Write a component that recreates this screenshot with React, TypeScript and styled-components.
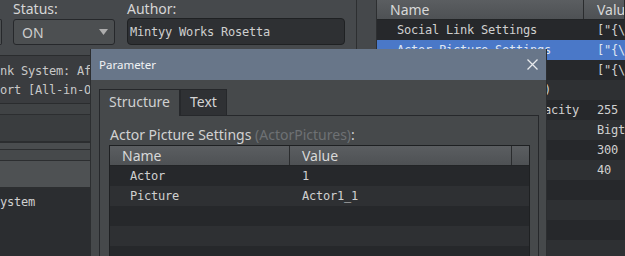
import React from 'react'
import styled, { createGlobalStyle } from 'styled-components'

const SANS = `"Noto Sans", "Open Sans", sans-serif`
const MONO = `"DejaVu Sans Mono", "Liberation Mono", monospace`

const EDGE = '#26282b'

const GlobalStyle = createGlobalStyle`
  html, body {
    margin: 0;
    padding: 0;
    width: 625px;
    height: 256px;
    overflow: hidden;
    background: #46494c;
  }
  * {
    box-sizing: border-box;
  }
`

const Root = styled.div`
  position: relative;
  display: flex;
  width: 625px;
  height: 256px;
  overflow: hidden;
  background: #46494c;
  font-family: ${SANS};
`

/* ---------- left (plugin info) ---------- */

const LeftPanel = styled.div`
  width: 356px;
  flex: none;
  display: flex;
  flex-direction: column;
`

const TopRow = styled.div`
  height: 55px;
  display: flex;
  align-items: flex-start;
  padding-top: 1px;
`

const NameStub = styled.div`
  width: 2px;
  height: 26px;
  margin: 18px 11px 0 0;
  border: 1px solid ${EDGE};
  border-left: none;
  border-radius: 0 3px 3px 0;
  background: #4d5052;
`

const Field = styled.div<{ $w: number; $gap?: number }>`
  width: ${p => p.$w}px;
  margin-left: ${p => p.$gap ?? 0}px;
  display: flex;
  flex-direction: column;
`

const Label = styled.div`
  height: 16px;
  line-height: 16px;
  margin-bottom: 2px;
  font-size: 14px;
  color: #d6d6d6;
`

const Select = styled.div`
  height: 26px;
  display: flex;
  align-items: center;
  justify-content: space-between;
  padding: 0 6px 0 8px;
  border: 1px solid ${EDGE};
  border-radius: 3px;
  background: #4c4f51;
  font-size: 14px;
  color: #cdcdcd;
`

const Input = styled.div`
  height: 27px;
  margin-top: -1px;
  display: flex;
  align-items: center;
  padding-left: 2px;
  border: 1px solid #1f2123;
  border-radius: 4px;
  background: #2e3033;
  font-family: ${MONO};
  font-size: 12px;
  letter-spacing: -0.22px;
  color: #cfcfcf;
  white-space: nowrap;
`

const HelpBox = styled.div`
  height: 49px;
  padding-top: 6px;
  border-top: 1px solid #2a2c2e;
  border-bottom: 1px solid #2a2c2e;
  background: #3a3c3f;
  font-family: ${MONO};
  font-size: 12px;
  letter-spacing: -0.22px;
  line-height: 19px;
  color: #c8c8c8;
  white-space: nowrap;
  overflow: hidden;
`

const Band = styled.div<{ $h: number; $bg: string; $line?: number }>`
  height: ${p => p.$h + (p.$line ?? 1)}px;
  background: ${p => p.$bg};
  border-bottom: ${p => p.$line ?? 1}px solid #2c2e30;
`

const PluginList = styled.div`
  flex: 1;
  padding-top: 3px;
  background: #2b2d30;
  font-family: ${MONO};
  font-size: 12px;
  letter-spacing: -0.22px;
  line-height: 20px;
  color: #d0d0d0;
  white-space: nowrap;
`

const Gutter = styled.div`
  width: 21px;
  flex: none;
  border-left: 1px solid #2d2f31;
  border-right: 1px solid #2d2f31;
  background: #45484b;
`

/* ---------- shared list look ---------- */

const Head = styled.div`
  height: 20px;
  display: flex;
  border-bottom: 1px solid #222426;
  background: linear-gradient(#5b5e61, #4e5154);
  font-size: 14px;
  line-height: 19px;
  color: #d8d8d8;
  white-space: nowrap;
`

const HeadCell = styled.div<{ $w?: number }>`
  ${p => (p.$w ? `width: ${p.$w}px; flex: none;` : 'flex: 1;')}
  padding-left: 12px;
  border-right: 1px solid #2a2c2e;
  overflow: hidden;
`

const Row = styled.div<{ $i: number; $sel?: boolean }>`
  height: 20px;
  display: flex;
  background: ${p => (p.$sel ? '#4a78c8' : p.$i % 2 ? '#2e3033' : '#26282b')};
  font-family: ${MONO};
  font-size: 12px;
  letter-spacing: -0.22px;
  line-height: 20px;
  color: ${p => (p.$sel ? '#dfe6f2' : '#d0d0d0')};
  white-space: nowrap;
`

const Cell = styled.div<{ $w?: number; $pad: number }>`
  ${p => (p.$w ? `width: ${p.$w}px; flex: none;` : 'flex: 1;')}
  padding-left: ${p => p.$pad}px;
  overflow: hidden;
`

/* ---------- right (parameter list) ---------- */

const ParamList = styled.div`
  flex: 1;
  min-width: 0;
  background: #26282b;
  overflow: hidden;
`

/* ---------- parameter dialog ---------- */

const Dialog = styled.div`
  position: absolute;
  left: 90px;
  top: 49px;
  width: 457px;
  height: 230px;
  display: flex;
  flex-direction: column;
  border-left: 1px solid #2c2e30;
  border-right: 1px solid #2c2e30;
  background: #46494b;
`

const TitleBar = styled.div`
  height: 31px;
  flex: none;
  display: flex;
  align-items: center;
  justify-content: space-between;
  padding: 0 7px 0 8px;
  background: #687689;
  font-size: 11.5px;
  color: #f0f2f4;
`

const Body = styled.div`
  flex: 1;
  padding: 9px 8px 0 8px;
  display: flex;
  flex-direction: column;
`

const TabBar = styled.div`
  height: 26px;
  display: flex;
  align-items: flex-start;
`

const Tab = styled.div<{ $w: number; $active?: boolean }>`
  position: relative;
  z-index: 1;
  width: ${p => p.$w}px;
  height: ${p => (p.$active ? 27 : 26)}px;
  padding-left: 9px;
  border: 1px solid ${EDGE};
  border-bottom: none;
  background: ${p => (p.$active ? '#46494b' : '#2f3134')};
  font-size: 14px;
  line-height: 24px;
  color: ${p => (p.$active ? '#cfd0d1' : '#d4d4d4')};
`

const Pane = styled.div`
  width: 440px;
  flex: 1;
  padding: 9px 8px 0 9px;
  border: 1px solid ${EDGE};
  border-bottom: none;
  background: #46494b;
`

const PaneLabel = styled.div`
  height: 20px;
  padding-left: 1px;
  font-size: 14px;
  line-height: 20px;
  color: #d2d2d2;
  white-space: nowrap;
`

const Hint = styled.span`
  color: #6e7174;
`

const Table = styled.div`
  width: 421px;
  height: 120px;
  border: 1px solid #1e2022;
  border-bottom: none;
  background: #26282b;
  overflow: hidden;
`

const Caret = () => (
  <svg width="9" height="6" viewBox="0 0 9 6">
    <polygon points="0,0 9,0 4.5,6" fill="#adadad" />
  </svg>
)

const CloseIcon = () => (
  <svg width="13" height="13" viewBox="0 0 13 13">
    <path d="M1.5 1.5 L11.5 11.5 M11.5 1.5 L1.5 11.5" stroke="#e8eaec" strokeWidth="1.3" fill="none" />
  </svg>
)

const params = [
  { name: 'Social Link Settings', value: '["{\\"Actor\\":\\"1\\"}"]' },
  { name: 'Actor Picture Settings', value: '["{\\"Actor\\":\\"1\\"}"]', selected: true },
  { name: 'Level Settings', value: '["{\\"Level\\":\\"1\\"}"]' },
  { name: 'Rank Up Sound (Common)', value: '' },
  { name: 'Social Link Window Opacity', value: '255' },
  { name: 'Window Font Face', value: 'Bigtext' },
  { name: 'Max Points', value: '300' },
  { name: 'Row Height', value: '40' },
  { name: '', value: '' },
  { name: '', value: '' },
  { name: '', value: '' },
  { name: '', value: '' },
]

const structure = [
  { name: 'Actor', value: '1' },
  { name: 'Picture', value: 'Actor1_1' },
  { name: '', value: '' },
  { name: '', value: '' },
  { name: '', value: '' },
]

export default function App() {
  return (
    <Root>
      <GlobalStyle />
      <LeftPanel>
        <TopRow>
          <NameStub />
          <Field $w={102}>
            <Label>Status:</Label>
            <Select>
              <span>ON</span>
              <Caret />
            </Select>
          </Field>
          <Field $w={218} $gap={12}>
            <Label>Author:</Label>
            <Input>Mintyy Works Rosetta</Input>
          </Field>
        </TopRow>
        <HelpBox>
          <div>nk System: After Battle Support</div>
          <div>ort [All-in-One Package]</div>
        </HelpBox>
        <Band $h={10} $bg="#404345" />
        <Band $h={26} $bg="#3a3d3f" $line={2} />
        <Band $h={6} $bg="#4a4d4f" />
        <Band $h={10} $bg="#46494b" />
        <Band $h={26} $bg="#4e5153" $line={2} />
        <PluginList>ystem</PluginList>
      </LeftPanel>
      <Gutter />
      <ParamList>
        <Head>
          <HeadCell $w={207} style={{ paddingLeft: 13 }}>Name</HeadCell>
          <HeadCell style={{ paddingLeft: 13 }}>Value</HeadCell>
        </Head>
        {params.map((p, i) => (
          <Row key={i} $i={i} $sel={p.selected}>
            <Cell $w={207} $pad={20}>{p.name}</Cell>
            <Cell $pad={13}>{p.value}</Cell>
          </Row>
        ))}
      </ParamList>

      <Dialog>
        <TitleBar>
          <span>Parameter</span>
          <CloseIcon />
        </TitleBar>
        <Body>
          <TabBar>
            <Tab $w={81} $active>Structure</Tab>
            <Tab $w={47}>Text</Tab>
          </TabBar>
          <Pane>
            <PaneLabel>
              Actor Picture Settings <Hint>(ActorPictures)</Hint>:
            </PaneLabel>
            <Table>
              <Head>
                <HeadCell $w={180}>Name</HeadCell>
                <HeadCell $w={222}>Value</HeadCell>
                <HeadCell style={{ borderRight: 'none' }} />
              </Head>
              {structure.map((r, i) => (
                <Row key={i} $i={i}>
                  <Cell $w={180} $pad={20}>{r.name}</Cell>
                  <Cell $pad={12}>{r.value}</Cell>
                </Row>
              ))}
            </Table>
          </Pane>
        </Body>
      </Dialog>
    </Root>
  )
}
